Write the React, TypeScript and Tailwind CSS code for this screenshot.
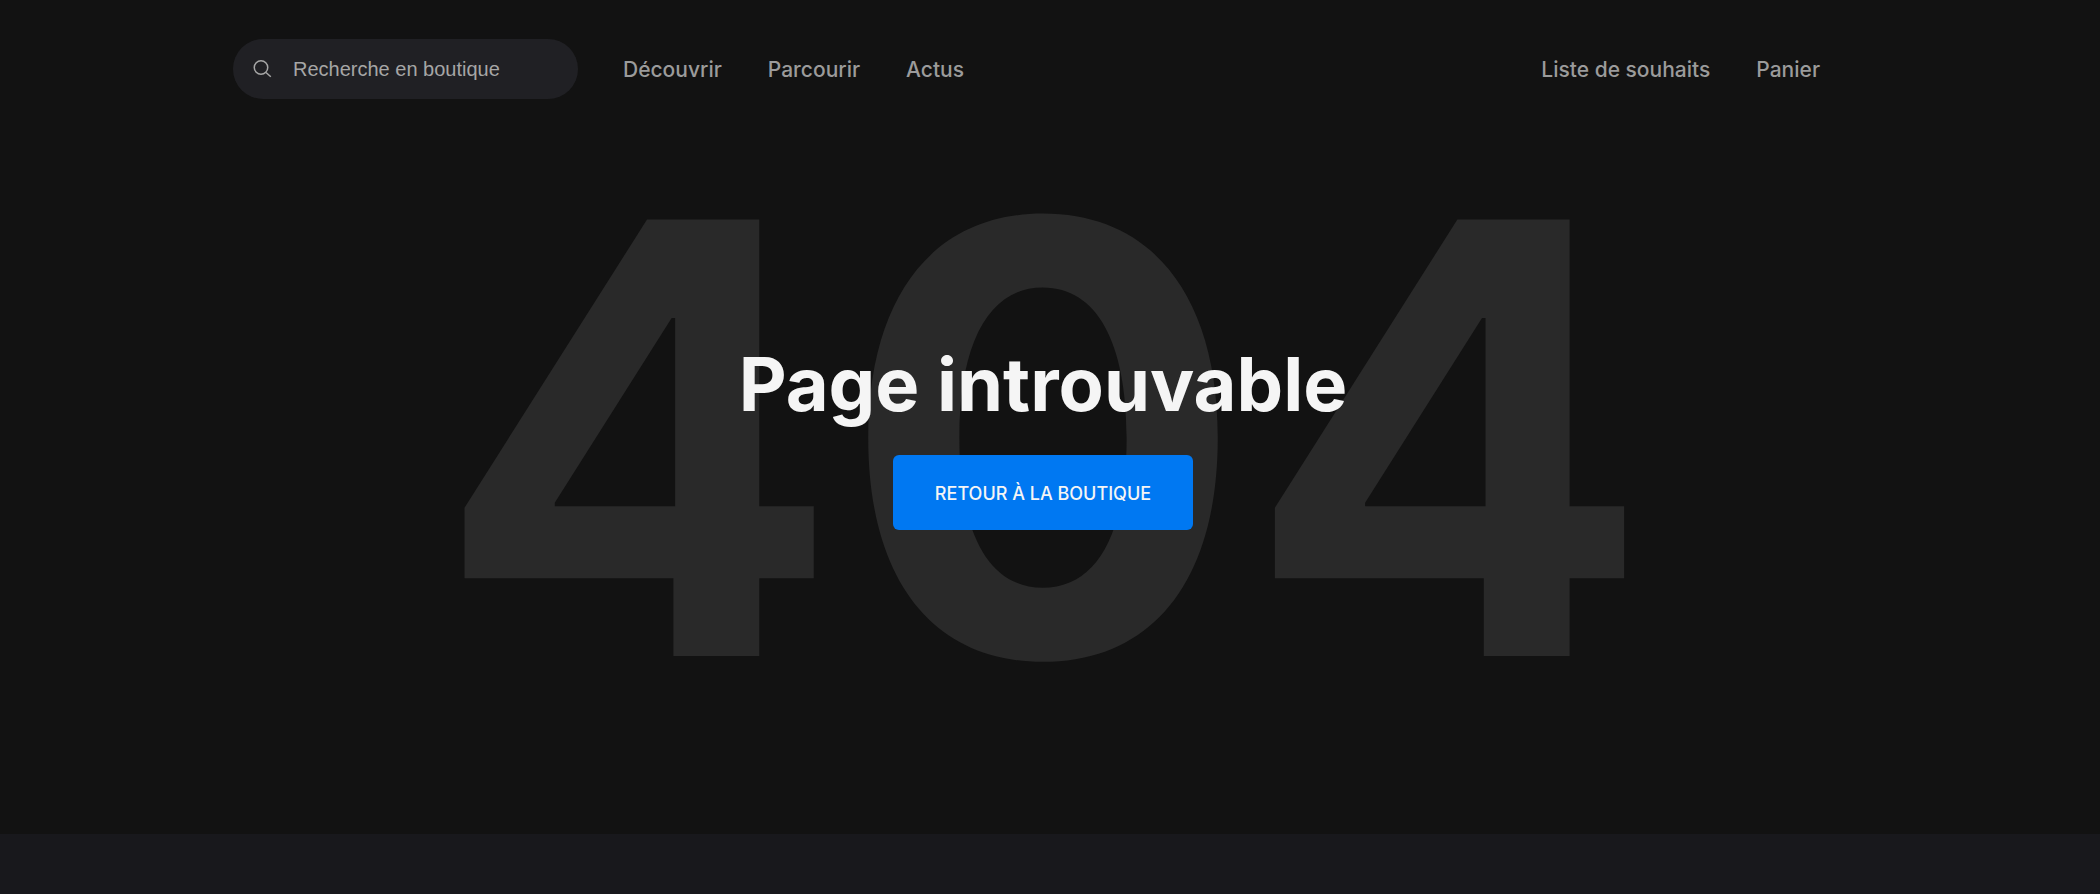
export default function App() {
  return (
    <div className="min-h-screen bg-[#121212] font-['Inter',sans-serif] text-[#f5f5f5]">
      <header className="mx-auto flex h-[138px] w-full max-w-[1634px] items-center">
        <form role="search" className="flex h-[60px] w-[345px] items-center gap-5 rounded-full bg-[#202024] pl-5 pr-6" onSubmit={(e) => e.preventDefault()}>
          <svg viewBox="0 0 20 20" className="size-5 shrink-0" fill="none" stroke="#a6a6a6" strokeWidth="1.5" aria-hidden="true">
            <circle cx="8" cy="8.5" r="6.75" />
            <path d="M13 13.5l4.8 4.2" />
          </svg>
          <input type="search" aria-label="Recherche en boutique" placeholder="Recherche en boutique" className="w-full min-w-0 bg-transparent font-['Liberation_Sans',sans-serif] text-xl outline-none placeholder:text-[#a6a6a6]" />
        </form>
        <nav aria-label="Boutique" className="ml-[45px] flex gap-[46px] pt-0.5 text-[21px] font-medium text-[#9b9b9b]">
          <a href="#decouvrir">Découvrir</a>
          <a href="#parcourir">Parcourir</a>
          <a href="#actus">Actus</a>
        </nav>
        <nav aria-label="Compte" className="ml-auto mr-[47px] flex gap-[46px] pt-0.5 text-[21px] font-medium text-[#9b9b9b]">
          <a href="#souhaits">Liste de souhaits</a>
          <a href="#panier">Panier</a>
        </nav>
      </header>
      <main className="grid h-[696px] justify-items-center pr-3.5">
        <p aria-hidden="true" className="col-start-1 row-start-1 text-[600px] leading-[600px] font-bold text-[#292929]">404</p>
        <div className="col-start-1 row-start-1 flex flex-col items-center pt-[200px]">
          <h1 className="text-[74px] leading-[92px] font-bold">Page introuvable</h1>
          <a href="#boutique" className="mt-[25px] flex h-[75px] w-[300px] items-center justify-center rounded-md bg-[#0078f2] pt-0.5 text-[18px] font-medium">RETOUR À LA BOUTIQUE</a>
        </div>
      </main>
      <footer className="h-[60px] bg-[#18181c]" />
    </div>
  );
}
